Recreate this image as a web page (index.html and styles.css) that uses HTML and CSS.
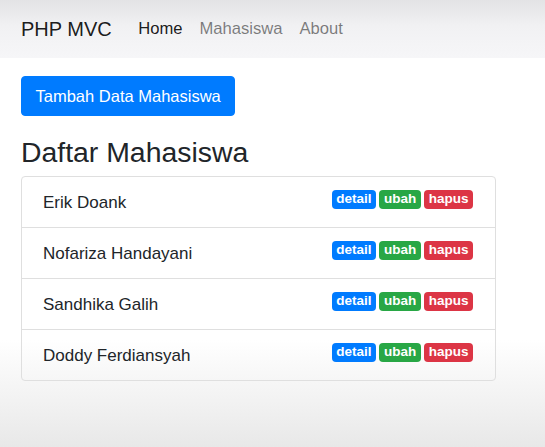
FILE: index.html
```html
<!DOCTYPE html>
<html lang="id">
<head>
<meta charset="utf-8">
<title>PHP MVC</title>
<link rel="stylesheet" href="styles.css">
</head>
<body>
<nav class="navbar">
  <a class="brand" href="#">PHP MVC</a>
  <ul class="nav">
    <li><a class="nav-link active" href="#">Home</a></li>
    <li><a class="nav-link" href="#">Mahasiswa</a></li>
    <li><a class="nav-link" href="#">About</a></li>
  </ul>
</nav>
<main class="container">
  <button class="btn-primary" type="button">Tambah Data Mahasiswa</button>
  <h3 class="title">Daftar Mahasiswa</h3>
  <ul class="list">
    <li class="item"><span class="name">Erik Doank</span><span class="badges"><a class="badge b-blue" href="#">detail</a><a class="badge b-green" href="#">ubah</a><a class="badge b-red" href="#">hapus</a></span></li>
    <li class="item"><span class="name">Nofariza Handayani</span><span class="badges"><a class="badge b-blue" href="#">detail</a><a class="badge b-green" href="#">ubah</a><a class="badge b-red" href="#">hapus</a></span></li>
    <li class="item"><span class="name">Sandhika Galih</span><span class="badges"><a class="badge b-blue" href="#">detail</a><a class="badge b-green" href="#">ubah</a><a class="badge b-red" href="#">hapus</a></span></li>
    <li class="item"><span class="name">Doddy Ferdiansyah</span><span class="badges"><a class="badge b-blue" href="#">detail</a><a class="badge b-green" href="#">ubah</a><a class="badge b-red" href="#">hapus</a></span></li>
  </ul>
</main>
</body>
</html>
```
FILE: styles.css
```css
* { box-sizing: border-box; }
html, body { margin: 0; padding: 0; }
body {
  font-family: "Liberation Sans", Arial, sans-serif;
  color: #212529;
  min-height: 447px;
  background: linear-gradient(to bottom, #ffffff 0, #ffffff 340px, #e8e8e8 447px);
}
a { text-decoration: none; }

.navbar {
  height: 58px;
  display: flex;
  align-items: center;
  padding: 0 21px;
  background: linear-gradient(to bottom, #e3e3e5 0%, #f1f1f3 45%, #f6f6f8 100%);
}
.brand {
  font-size: 20px;
  color: rgba(0,0,0,.9);
  margin-right: 18px;
  line-height: 30px;
}
.nav {
  list-style: none;
  margin: 0;
  padding: 0;
  display: flex;
}
.nav-link {
  display: block;
  font-size: 16.6px;
  padding: 0 8.5px;
  line-height: 26px;
  color: rgba(0,0,0,.5);
}
.nav-link.active { color: rgba(0,0,0,.9); }

.container {
  padding: 18px 21px 0;
}
.btn-primary {
  display: inline-block;
  font-family: inherit;
  font-size: 16.5px;
  line-height: 24px;
  padding: 7px 13.5px;
  color: #fff;
  background: #007bff;
  border: 1px solid #007bff;
  border-radius: 4px;
}
.title {
  font-size: 28.4px;
  font-weight: 400;
  line-height: 1.2;
  margin: 19px 0 7px;
}
.list {
  list-style: none;
  margin: 0;
  padding: 0;
  width: 475px;
  border: 1px solid #dfdfdf;
  border-radius: 4px;
}
.item {
  display: flex;
  justify-content: space-between;
  align-items: flex-start;
  padding: 12.5px 22px 12.5px 21px;
  font-size: 17px;
  line-height: 25px;
}
.item + .item { border-top: 1px solid #dfdfdf; }
.badges {
  display: flex;
  gap: 3.5px;
}
.badge {
  display: inline-block;
  font-size: 13.5px;
  font-weight: 700;
  line-height: 1;
  padding: 2.5px 4.5px;
  height: 19px;
  color: #fff;
  border-radius: 4px;
}
.b-blue { background: #007bff; }
.b-green { background: #28a745; }
.b-red { background: #dc3545; }
```
